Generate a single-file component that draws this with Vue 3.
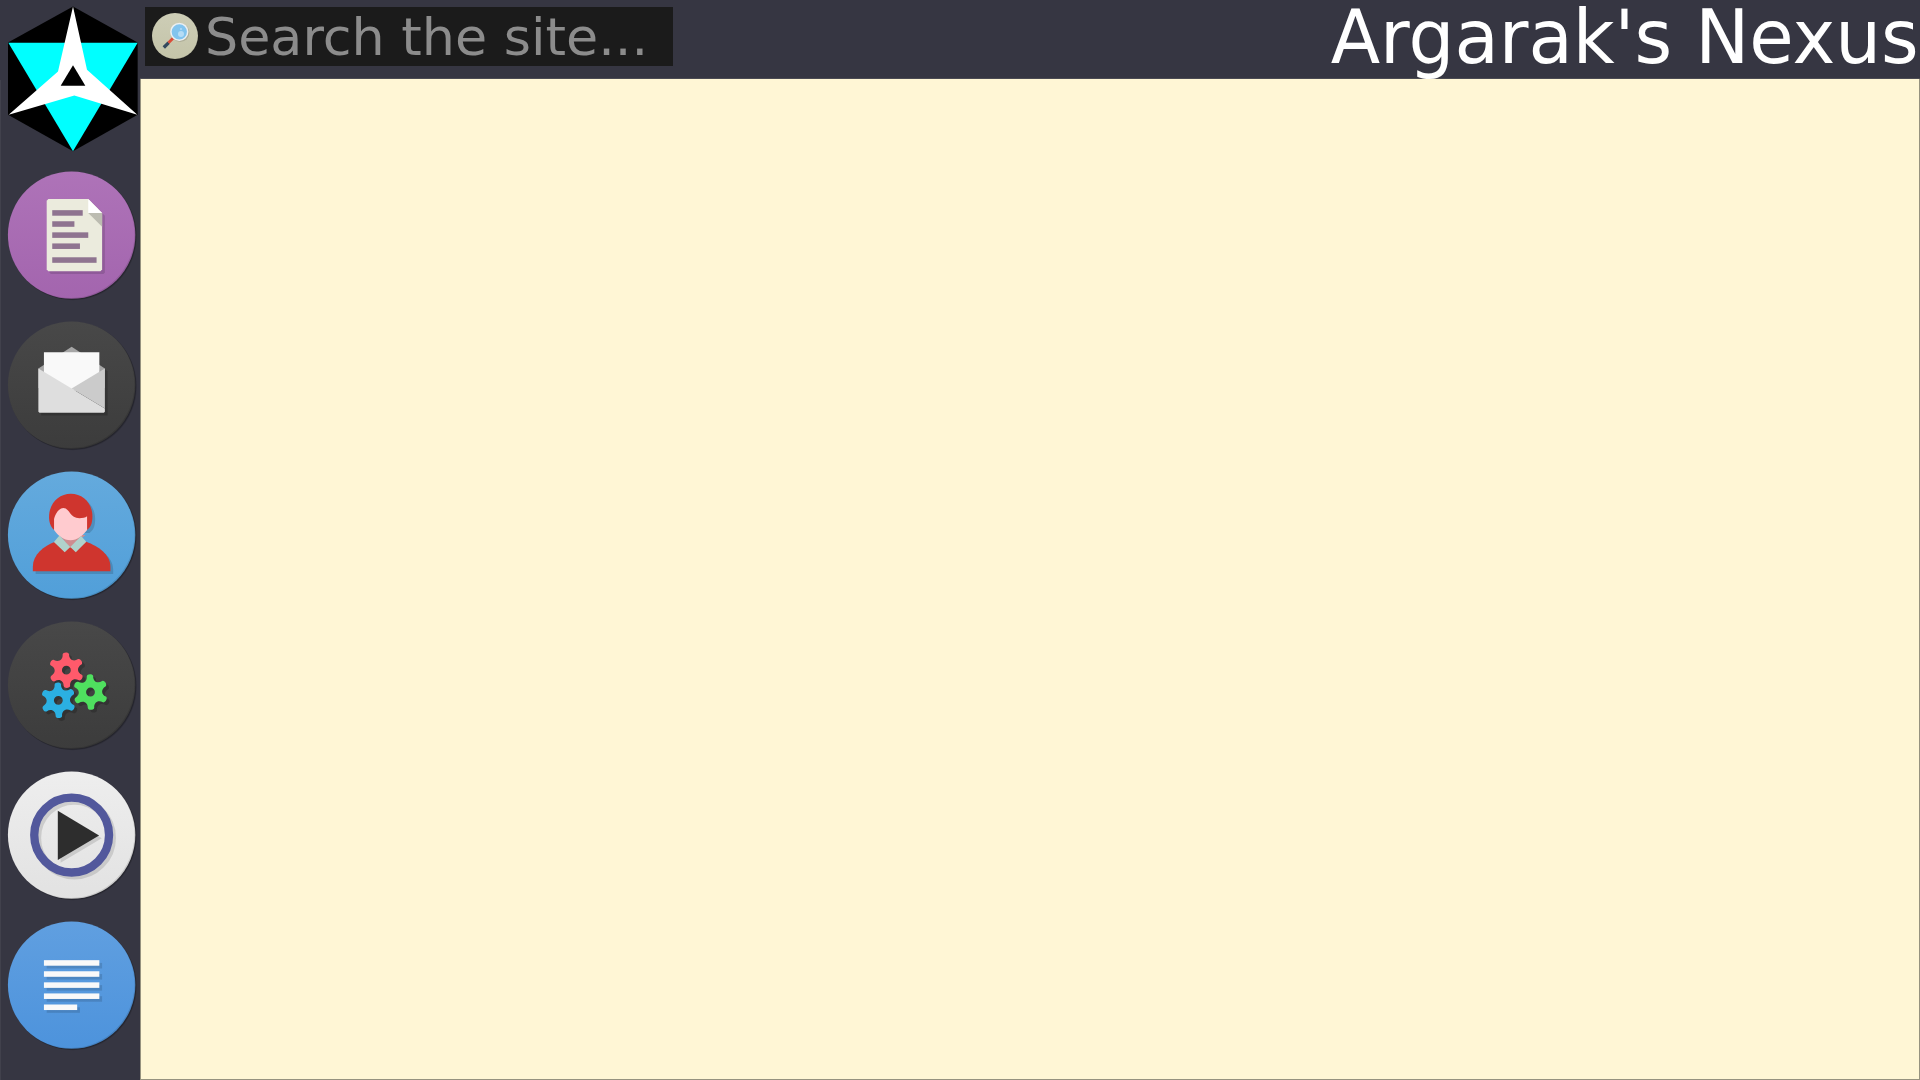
<script setup>
// Builds a rounded six-tooth gear centred on (cx, cy)
function gear(cx, cy, turn) {
  const p = (r, deg) => {
    const a = ((deg + turn - 90) * Math.PI) / 180
    return `${(cx + r * Math.cos(a)).toFixed(2)} ${(cy + r * Math.sin(a)).toFixed(2)}`
  }
  let d = `M${p(5.8, -11.5)}`
  for (let i = 0; i < 6; i++) {
    const t = i * 60
    d += `C${p(6.75, t - 9.5)} ${p(6.75, t + 9.5)} ${p(5.8, t + 11.5)}`
    d += `C${p(3.9, t + 16)} ${p(3.9, t + 44)} ${p(5.8, t + 48.5)}`
  }
  const [x, y] = [cx - 1.6, cy]
  return `${d}ZM${x} ${y}a1.6 1.6 0 1 0 3.2 0a1.6 1.6 0 1 0 -3.2 0Z`
}

const gears = [
  { d: gear(22.1, 18.6, -2), fill: '#ff5a6b' },
  { d: gear(30.8, 26.5, -2), fill: '#4fe05f' },
  { d: gear(19.2, 29.5, -2), fill: '#2bb0e2' },
]

const items = [
  { name: 'articles', label: 'Articles', top: '#ae73b8', bottom: '#a365ae' },
  { name: 'mail', label: 'Mail', top: '#484848', bottom: '#3c3c3c' },
  { name: 'profile', label: 'Profile', top: '#64aadd', bottom: '#519fd9' },
  { name: 'settings', label: 'Settings', top: '#484848', bottom: '#3c3c3c' },
  { name: 'media', label: 'Media', top: '#eeeeee', bottom: '#e2e2e2' },
  { name: 'text', label: 'Text', top: '#609fe0', bottom: '#4d93dc' },
]

const bars = [[15, 20], [19, 20], [23, 20], [27, 20], [31, 12]]
const lines = [[15, 11], [19, 8], [23, 13], [27, 10], [32, 16]]
const body = 'M18 26.4C14 28 10 31 10 35.4V37H38V35.4C38 31 33.5 28 29.3 26.4Z'
const hair = 'M15.85 17.5C15.85 12.6 19.3 9.1 23.7 9.1S31.5 12.6 31.5 17.2C31.5 20 30.7 21.3 29.5 22.2H17.7C16.3 20.9 15.85 19.3 15.85 17.5Z'
</script>

<template>
  <div class="page">
    <aside class="sidebar">
      <svg class="logo" viewBox="0 0.5 420 480" aria-label="Home">
        <path d="M219 20L413 128V345L219 454L24 345V128Z" fill="#000" />
        <path d="M25 129H413L219 454Z" fill="#0ff" />
        <path d="M219 20L261 210L412 345L223 287L26 345L174 215Z" fill="#fff" />
        <path d="M219 196L256 258H182Z" fill="#000" />
      </svg>
      <nav class="menu">
        <a v-for="item in items" :key="item.name" class="item" :aria-label="item.label">
          <svg viewBox="-0.05 -0.22 48 48">
            <defs>
              <linearGradient :id="'bg-' + item.name" x1="0" y1="0" x2="0" y2="1">
                <stop offset="0" :stop-color="item.top" />
                <stop offset="1" :stop-color="item.bottom" />
              </linearGradient>
            </defs>
            <circle cx="24.4" cy="24.4" r="23.1" opacity=".12" />
            <circle cx="24.2" cy="24.2" r="23" opacity=".15" />
            <circle cx="24" cy="24" r="23" :fill="`url(#bg-${item.name})`" />
            <path d="M40.26 7.74A23 23 0 1 1 7.74 40.26A23 23 0 0 0 40.26 7.74Z" opacity=".12" />

            <g v-if="item.name === 'articles'">
              <path d="M16 12.5V37.5L16.5 38H35.5L36 37.5V17L31 12Z" opacity=".13" />
              <path d="M15.6 11H30L35 16V36.4L34.4 37H15.6L15 36.4V11.6Z" fill="#ebebdd" />
              <path d="M30 16H35V21Z" fill="#bcbcb1" />
              <path d="M30 11L35 16H30Z" fill="#fff" />
              <rect v-for="l in lines" :key="l[0]" x="17" :y="l[0]" :width="l[1]" height="2" fill="#8f7490" />
            </g>

            <g v-else-if="item.name === 'mail'">
              <path d="M13 19L25 11.2L37 19V35H13Z" opacity=".18" />
              <path d="M12 18L24 10.2L36 18V25H12Z" fill="#a6a6a6" />
              <path d="M14 12.1H34V26H14Z" fill="#f9f9f9" />
              <path d="M12 18L36 32.4V33.6L35.6 34H12.4L12 33.6Z" fill="#dedede" />
              <path d="M24 25.2L36 18V32.4Z" fill="#cbcbcb" />
            </g>

            <g v-else-if="item.name === 'profile'">
              <g transform="translate(1 1)" opacity=".14"><path :d="body + hair" /></g>
              <path :d="body" fill="#cf352e" />
              <path :d="hair" fill="#cf352e" />
              <path d="M19.5 24L29 24L23.5 28.6Z" fill="#ce8d90" />
              <path d="M17.65 18.2C18.2 16 19.6 14.2 21 14.2C23.3 14.2 23.3 17.9 26.8 17.9C28 17.9 28.9 17.7 29.57 17.2V22.2C28 24.3 26 25.9 23.6 25.9S19 24.3 17.65 22.2Z" fill="#ffcbcf" />
              <path d="M19.6 24.1L23.5 28.3L21.5 30.2L17.6 26.5ZM27.4 24.3L23.5 28.3L25.5 30.2L29.3 26.4Z" fill="#b0d2cb" />
            </g>

            <g v-else-if="item.name === 'settings'" fill-rule="evenodd">
              <path v-for="g in gears" :key="g.fill + 's'" :d="g.d" transform="translate(1 1)" opacity=".2" />
              <path v-for="g in gears" :key="g.fill" :d="g.d" :fill="g.fill" />
            </g>

            <g v-else-if="item.name === 'media'">
              <circle cx="25" cy="25" r="13.5" fill="none" stroke="#000" stroke-width="3" opacity=".12" />
              <path d="M20 16.2L34.9 25.1L20 34Z" opacity=".12" />
              <circle cx="24" cy="24" r="13.5" fill="none" stroke="#52589c" stroke-width="3" />
              <path d="M19 15.2L33.9 24.1L19 33Z" fill="#2d2d2d" />
            </g>

            <g v-else>
              <rect v-for="b in bars" :key="'s' + b[0]" x="15" :y="b[0] + 1" :width="b[1]" height="2" opacity=".13" />
              <rect v-for="b in bars" :key="b[0]" x="14" :y="b[0]" :width="b[1]" height="2" fill="#f9f9f9" />
            </g>
          </svg>
        </a>
      </nav>
    </aside>

    <div class="main">
      <header class="header">
        <label class="search">
          <svg viewBox="0 0 48 48">
            <defs>
              <linearGradient id="bg-search" x1="0" y1="0" x2="0" y2="1">
                <stop offset="0" stop-color="#cdcdb6" />
                <stop offset="1" stop-color="#c4c4a9" />
              </linearGradient>
            </defs>
            <circle cx="24" cy="24" r="23" fill="url(#bg-search)" />
            <path d="M40.26 7.74A23 23 0 1 1 7.74 40.26A23 23 0 0 0 40.26 7.74Z" opacity=".1" />
            <circle cx="29.2" cy="20.8" r="9.2" opacity=".12" />
            <path d="M12.8 35.5L17.7 30.6" stroke="#34495e" stroke-width="3.4" />
            <path d="M17.5 30.8L22 26.3" stroke="#dc4b37" stroke-width="2.8" />
            <circle cx="28.3" cy="19.8" r="8.4" fill="#82c4ee" stroke="#eceff1" stroke-width="1.5" />
            <circle cx="30" cy="22" r="3" fill="#b6dcf5" />
            <circle cx="30" cy="17" r="1" fill="#b6dcf5" />
          </svg>
          <input type="text" placeholder="Search the site..." />
        </label>
        <h1 class="title">Argarak's Nexus</h1>
      </header>
      <main class="content"></main>
    </div>
  </div>
</template>

<style>
body {
  margin: 0;
  overflow: hidden;
}
</style>

<style scoped>
.page {
  display: flex;
  height: 1080px;
  background: #363642;
  font-family: "DejaVu Sans", sans-serif;
}
.sidebar {
  box-sizing: border-box;
  display: flex;
  flex-direction: column;
  width: 140px;
  flex: none;
  background: linear-gradient(#41414c, #41414c) 0 80px / 1px 1000px no-repeat;
}
.logo {
  display: block;
  width: 140px;
  height: 160px;
}
.menu {
  display: flex;
  flex-direction: column;
}
.item {
  box-sizing: border-box;
  height: 150px;
  padding: 8px 0 0 5px;
}
.item svg {
  display: block;
  width: 133px;
  height: 133px;
}
.main {
  display: flex;
  flex-direction: column;
  flex: 1;
}
.header {
  box-sizing: border-box;
  display: flex;
  justify-content: space-between;
  align-items: flex-start;
  height: 79px;
  padding: 7px 1px 0 5px;
  border-bottom: 1px solid #4b4b53;
}
.search {
  display: flex;
  box-sizing: border-box;
  width: 528px;
  height: 59px;
  padding-left: 6px;
  background: #1b1b1b;
}
.search svg {
  flex: none;
  width: 48px;
  height: 48px;
  margin-top: 4.5px;
}
.search input {
  flex: 1;
  min-width: 0;
  height: 59px;
  padding: 0 0 0 6px;
  border: 0;
  background: none;
  color: #8c8c8c;
  font: 52.3px "DejaVu Sans", sans-serif;
}
.search input::placeholder {
  color: #8c8c8c;
  opacity: 1;
}
.title {
  margin: -4px 0 0;
  color: #fff;
  font-size: 72px;
  font-weight: 400;
  line-height: 70px;
  white-space: nowrap;
  transform: scale(1.004, 1.047);
  transform-origin: 100% 60px;
}
.content {
  position: relative;
  box-sizing: border-box;
  flex: 1;
  border: 1px solid #96927f;
  border-top: 0;
  background: #fff6d5;
}
</style>
